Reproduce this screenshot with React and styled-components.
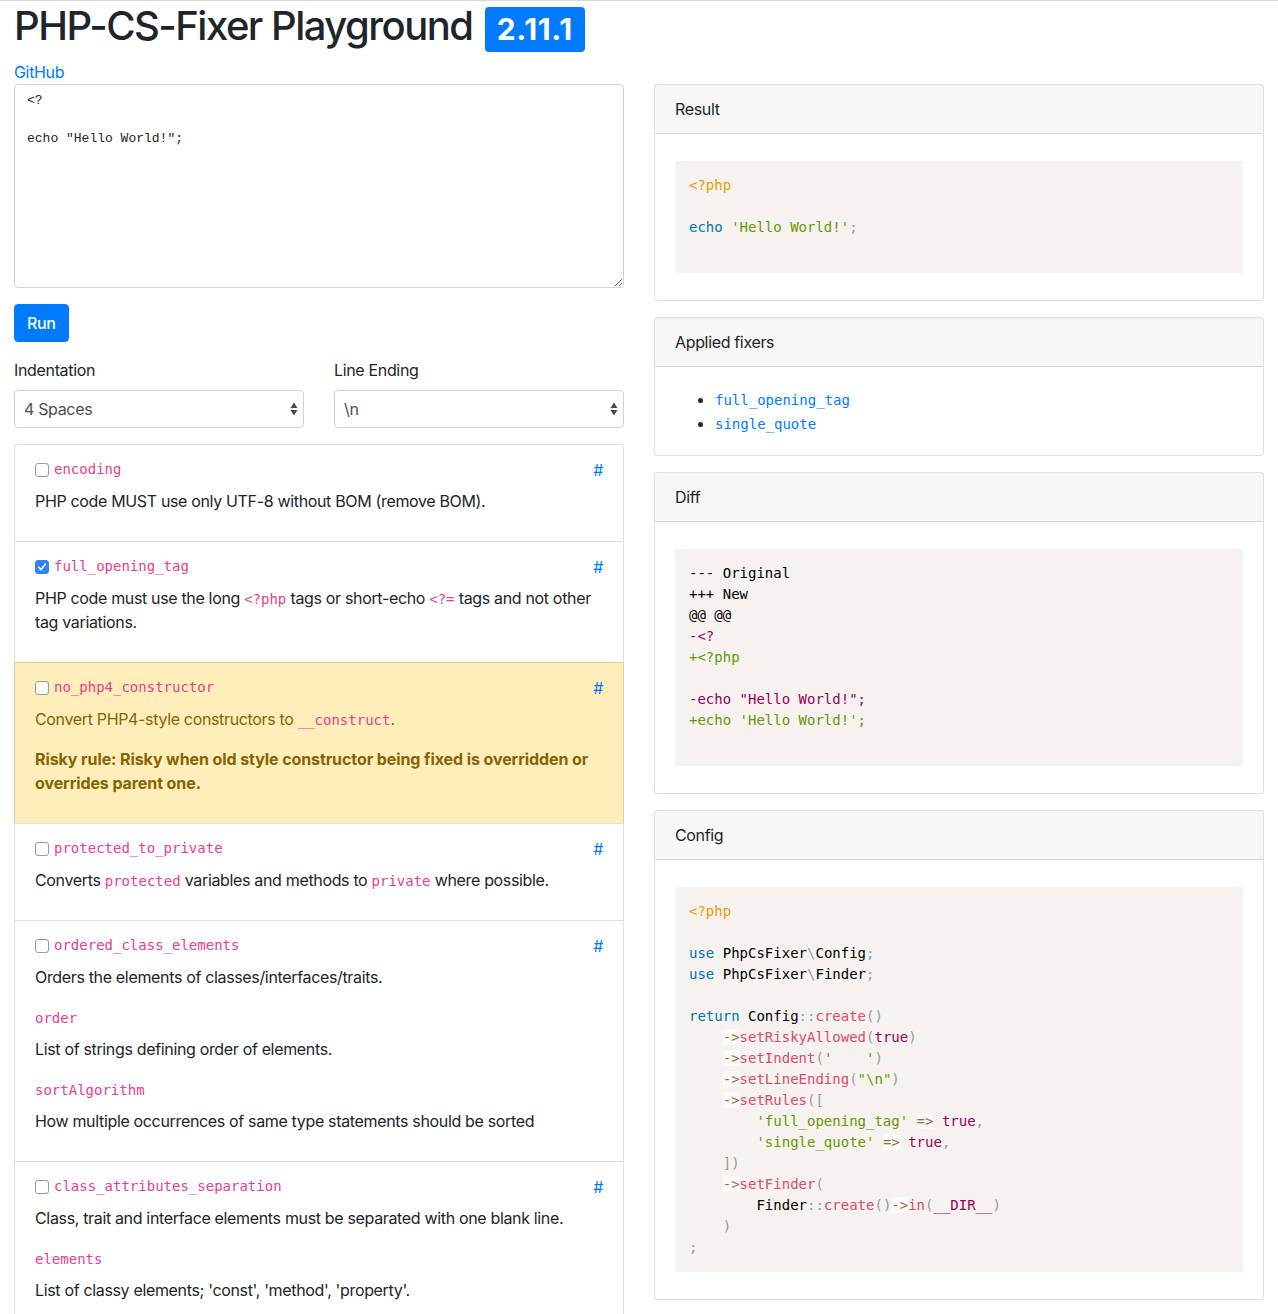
import React from 'react';
import styled, {createGlobalStyle} from 'styled-components';

const GlobalStyle = createGlobalStyle`
  * { box-sizing: border-box; }
  body {
    margin: 0;
    border-top: 1px solid #d9d9d9;
    font-family: Inter, "Liberation Sans", Arial, sans-serif;
    font-size: 16px;
    line-height: 1.5;
    letter-spacing: -0.34px;
    color: #212529;
    background: #fff;
  }
`;

const Page = styled.div`
  padding: 0 14px 40px;
`;

const Title = styled.h1`
  margin: 1px 0 8px;
  font-size: 40px;
  font-weight: 500;
  line-height: 1.2;
  letter-spacing: -1.5px;
`;

const Badge = styled.span`
  display: inline-block;
  margin-left: 3px;
  padding: 7.5px 12px;
  font-size: 30px;
  font-weight: 700;
  line-height: 1;
  letter-spacing: 0.6px;
  color: #fff;
  background: #007bff;
  border-radius: 4px;
  vertical-align: baseline;
`;

const Link = styled.a`
  color: #007bff;
  text-decoration: none;
`;

const Columns = styled.div`
  display: grid;
  grid-template-columns: 1fr 1fr;
  column-gap: 30px;
  align-items: start;
`;

const Left = styled.div`
  display: flex;
  flex-direction: column;
`;

const Right = styled.div`
  display: flex;
  flex-direction: column;
  gap: 16px;
`;

const Editor = styled.textarea`
  display: block;
  width: 100%;
  height: 204px;
  padding: 6px 12px;
  font-family: "Liberation Mono", "Courier New", monospace;
  font-size: 13px;
  line-height: 19px;
  letter-spacing: 0;
  color: #212529;
  border: 1px solid #ced4da;
  border-radius: 4px;
  resize: vertical;
  outline: none;
`;

const RunButton = styled.button`
  align-self: flex-start;
  margin-top: 16px;
  height: 38px;
  padding: 0 12px;
  font-family: inherit;
  font-size: 16px;
  font-weight: 500;
  letter-spacing: -0.34px;
  color: #fff;
  background: #007bff;
  border: 1px solid #007bff;
  border-radius: 4px;
`;

const FormRow = styled.div`
  display: grid;
  grid-template-columns: 1fr 1fr;
  column-gap: 30px;
  margin-top: 16px;
`;

const Label = styled.label`
  display: block;
  margin-bottom: 8px;
`;

const SelectWrap = styled.div`
  position: relative;
`;

const Select = styled.select`
  display: block;
  width: 100%;
  height: 38px;
  padding: 0 24px 0 9px;
  font-family: inherit;
  font-size: 16px;
  letter-spacing: -0.34px;
  color: #495057;
  background: #fff;
  border: 1px solid #ced4da;
  border-radius: 4px;
  appearance: none;
  outline: none;
`;

const Arrows = styled.svg`
  position: absolute;
  right: 4px;
  top: 11px;
  pointer-events: none;
`;

const FixerList = styled.div`
  margin-top: 16px;
  display: flex;
  flex-direction: column;
`;

const FixerItem = styled.div`
  padding: 12px 20px;
  border: 1px solid rgba(0, 0, 0, 0.125);
  margin-top: -1px;
  background: ${(p) => (p.$warning ? '#ffeeba' : '#fff')};
  color: ${(p) => (p.$warning ? '#856404' : '#212529')};
  &:first-child {
    margin-top: 0;
    border-top-left-radius: 4px;
    border-top-right-radius: 4px;
  }
`;

const FixerHead = styled.div`
  display: flex;
  align-items: center;
  justify-content: space-between;
  height: 24px;
  margin-bottom: 8px;
  padding-top: 2px;
`;

const NameLabel = styled.label`
  display: flex;
  align-items: center;
  gap: 5px;
`;

const Box = styled.span`
  display: inline-flex;
  align-items: center;
  justify-content: center;
  width: 14px;
  height: 14px;
  border-radius: 3px;
  border: 1px solid ${(p) => (p.$checked ? '#2f84f7' : '#9a9a9a')};
  background: ${(p) => (p.$checked ? '#2f84f7' : '#fff')};
`;

const Code = styled.code`
  font-family: "DejaVu Sans Mono", Menlo, monospace;
  font-size: 14px;
  letter-spacing: 0;
  color: #e83e8c;
`;

const Anchor = styled.a`
  color: #007bff;
  text-decoration: none;
`;

const Desc = styled.p`
  margin: 0 0 16px;
  font-weight: ${(p) => (p.$bold ? 700 : 400)};
  letter-spacing: ${(p) => (p.$bold ? '-0.09px' : '-0.34px')};
`;

const OptionName = styled.div`
  margin-bottom: 8px;
`;

const Card = styled.div`
  border: 1px solid rgba(0, 0, 0, 0.125);
  border-radius: 4px;
  background: #fff;
`;

const CardHeader = styled.div`
  padding: 12px 20px;
  background: rgba(0, 0, 0, 0.03);
  border-bottom: 1px solid rgba(0, 0, 0, 0.125);
`;

const CardBody = styled.div`
  padding: 20px;
`;

const Pre = styled.pre`
  margin: 7px 0;
  padding: 14px;
  background: #f5f2f0;
  font-family: "DejaVu Sans Mono", Monaco, monospace;
  font-size: 14px;
  line-height: 21px;
  letter-spacing: 0;
  color: #000;
  white-space: pre;
  overflow: hidden;
`;

const colors = {
  php: '#ee9900',
  kw: '#0077aa',
  str: '#669900',
  fn: '#dd4a68',
  p: '#999999',
  op: '#9a6e3a',
  bool: '#990055',
  del: '#990055',
  ins: '#669900',
};

const Tok = styled.span`
  color: ${(p) => colors[p.$t]};
  background: ${(p) => (p.$t === 'op' ? 'rgba(255, 255, 255, 0.5)' : 'transparent')};
`;

const FixerLinks = styled.ul`
  margin: 0;
  padding-left: 40px;
  li { height: 24px; line-height: 24px; }
  a { color: #007bff; text-decoration: none; }
  a code { color: inherit; }
`;

const Checkbox = ({checked}) => (
  <Box $checked={checked}>
    {checked && (
      <svg width="10" height="10" viewBox="0 0 10 10">
        <path d="M1.8 5.2 L4 7.6 L8.3 2.2" fill="none" stroke="#fff" strokeWidth="1.6" strokeLinecap="round" strokeLinejoin="round" />
      </svg>
    )}
  </Box>
);

const fixers = [
  {
    name: 'encoding',
    desc: ['PHP code MUST use only UTF-8 without BOM (remove BOM).'],
  },
  {
    name: 'full_opening_tag',
    checked: true,
    desc: ['PHP code must use the long ', {code: '<?php'}, ' tags or short-echo ', {code: '<?='}, ' tags and not other tag variations.'],
  },
  {
    name: 'no_php4_constructor',
    warning: true,
    desc: ['Convert PHP4-style constructors to ', {code: '__construct'}, '.'],
    risky: 'Risky rule: Risky when old style constructor being fixed is overridden or overrides parent one.',
  },
  {
    name: 'protected_to_private',
    desc: ['Converts ', {code: 'protected'}, ' variables and methods to ', {code: 'private'}, ' where possible.'],
  },
  {
    name: 'ordered_class_elements',
    desc: ['Orders the elements of classes/interfaces/traits.'],
    options: [
      {name: 'order', desc: 'List of strings defining order of elements.'},
      {name: 'sortAlgorithm', desc: 'How multiple occurrences of same type statements should be sorted'},
    ],
  },
  {
    name: 'class_attributes_separation',
    desc: ['Class, trait and interface elements must be separated with one blank line.'],
    options: [
      {name: 'elements', desc: "List of classy elements; 'const', 'method', 'property'."},
    ],
  },
];

const Fixer = ({fixer}) => (
  <FixerItem $warning={fixer.warning}>
    <FixerHead>
      <NameLabel>
        <Checkbox checked={fixer.checked} />
        <Code>{fixer.name}</Code>
      </NameLabel>
      <Anchor href="#">#</Anchor>
    </FixerHead>
    <Desc>
      {fixer.desc.map((part, i) =>
        typeof part === 'string' ? <React.Fragment key={i}>{part}</React.Fragment> : <Code key={i}>{part.code}</Code>
      )}
    </Desc>
    {fixer.risky && <Desc $bold>{fixer.risky}</Desc>}
    {fixer.options &&
      fixer.options.map((opt) => (
        <React.Fragment key={opt.name}>
          <OptionName>
            <Code>{opt.name}</Code>
          </OptionName>
          <Desc>{opt.desc}</Desc>
        </React.Fragment>
      ))}
  </FixerItem>
);

const ResultCode = () => (
  <Pre>
    <Tok $t="php">{'<?php'}</Tok>
    {'\n\n'}
    <Tok $t="kw">echo</Tok> <Tok $t="str">'Hello World!'</Tok>
    <Tok $t="p">;</Tok>
    {'\n '}
  </Pre>
);

const DiffCode = () => (
  <Pre>
    {'--- Original\n+++ New\n@@ @@\n'}
    <Tok $t="del">{'-<?'}</Tok>
    {'\n'}
    <Tok $t="ins">{'+<?php'}</Tok>
    {'\n\n'}
    <Tok $t="del">{'-echo "Hello World!";'}</Tok>
    {'\n'}
    <Tok $t="ins">{"+echo 'Hello World!';"}</Tok>
    {'\n '}
  </Pre>
);

const ConfigCode = () => (
  <Pre>
    <Tok $t="php">{'<?php'}</Tok>
    {'\n\n'}
    <Tok $t="kw">use</Tok> PhpCsFixer<Tok $t="p">\</Tok>Config<Tok $t="p">;</Tok>
    {'\n'}
    <Tok $t="kw">use</Tok> PhpCsFixer<Tok $t="p">\</Tok>Finder<Tok $t="p">;</Tok>
    {'\n\n'}
    <Tok $t="kw">return</Tok> Config<Tok $t="p">::</Tok><Tok $t="fn">create</Tok><Tok $t="p">()</Tok>
    {'\n    '}
    <Tok $t="op">-&gt;</Tok><Tok $t="fn">setRiskyAllowed</Tok><Tok $t="p">(</Tok><Tok $t="bool">true</Tok><Tok $t="p">)</Tok>
    {'\n    '}
    <Tok $t="op">-&gt;</Tok><Tok $t="fn">setIndent</Tok><Tok $t="p">(</Tok><Tok $t="str">{"'    '"}</Tok><Tok $t="p">)</Tok>
    {'\n    '}
    <Tok $t="op">-&gt;</Tok><Tok $t="fn">setLineEnding</Tok><Tok $t="p">(</Tok><Tok $t="str">{'"\\n"'}</Tok><Tok $t="p">)</Tok>
    {'\n    '}
    <Tok $t="op">-&gt;</Tok><Tok $t="fn">setRules</Tok><Tok $t="p">([</Tok>
    {'\n        '}
    <Tok $t="str">'full_opening_tag'</Tok> <Tok $t="op">=&gt;</Tok> <Tok $t="bool">true</Tok><Tok $t="p">,</Tok>
    {'\n        '}
    <Tok $t="str">'single_quote'</Tok> <Tok $t="op">=&gt;</Tok> <Tok $t="bool">true</Tok><Tok $t="p">,</Tok>
    {'\n    '}
    <Tok $t="p">])</Tok>
    {'\n    '}
    <Tok $t="op">-&gt;</Tok><Tok $t="fn">setFinder</Tok><Tok $t="p">(</Tok>
    {'\n        '}
    Finder<Tok $t="p">::</Tok><Tok $t="fn">create</Tok><Tok $t="p">()</Tok><Tok $t="op">-&gt;</Tok><Tok $t="fn">in</Tok>
    <Tok $t="p">(</Tok><Tok $t="bool">__DIR__</Tok><Tok $t="p">)</Tok>
    {'\n    '}
    <Tok $t="p">)</Tok>
    {'\n'}
    <Tok $t="p">;</Tok>
  </Pre>
);

const UpDown = () => (
  <Arrows width="12" height="16" viewBox="0 0 12 16">
    <path d="M6 1.5 L9.5 7 L2.5 7 Z" fill="#4a4a4a" />
    <path d="M6 14.5 L9.5 9 L2.5 9 Z" fill="#4a4a4a" />
  </Arrows>
);

export default function App() {
  return (
    <Page>
      <GlobalStyle />
      <Title>
        PHP-CS-Fixer Playground <Badge>2.11.1</Badge>
      </Title>
      <Link href="#">GitHub</Link>
      <Columns>
        <Left>
          <Editor defaultValue={'<?\n\necho "Hello World!";\n'} spellCheck={false} />
          <RunButton>Run</RunButton>
          <FormRow>
            <div>
              <Label>Indentation</Label>
              <SelectWrap>
                <Select defaultValue="4">
                  <option value="4">4 Spaces</option>
                  <option value="2">2 Spaces</option>
                  <option value="t">Tab</option>
                </Select>
                <UpDown />
              </SelectWrap>
            </div>
            <div>
              <Label>Line Ending</Label>
              <SelectWrap>
                <Select defaultValue="n">
                  <option value="n">\n</option>
                  <option value="rn">\r\n</option>
                </Select>
                <UpDown />
              </SelectWrap>
            </div>
          </FormRow>
          <FixerList>
            {fixers.map((f) => (
              <Fixer key={f.name} fixer={f} />
            ))}
          </FixerList>
        </Left>
        <Right>
          <Card>
            <CardHeader>Result</CardHeader>
            <CardBody>
              <ResultCode />
            </CardBody>
          </Card>
          <Card>
            <CardHeader>Applied fixers</CardHeader>
            <CardBody>
              <FixerLinks>
                <li><a href="#"><Code>full_opening_tag</Code></a></li>
                <li><a href="#"><Code>single_quote</Code></a></li>
              </FixerLinks>
            </CardBody>
          </Card>
          <Card>
            <CardHeader>Diff</CardHeader>
            <CardBody>
              <DiffCode />
            </CardBody>
          </Card>
          <Card>
            <CardHeader>Config</CardHeader>
            <CardBody>
              <ConfigCode />
            </CardBody>
          </Card>
        </Right>
      </Columns>
    </Page>
  );
}
